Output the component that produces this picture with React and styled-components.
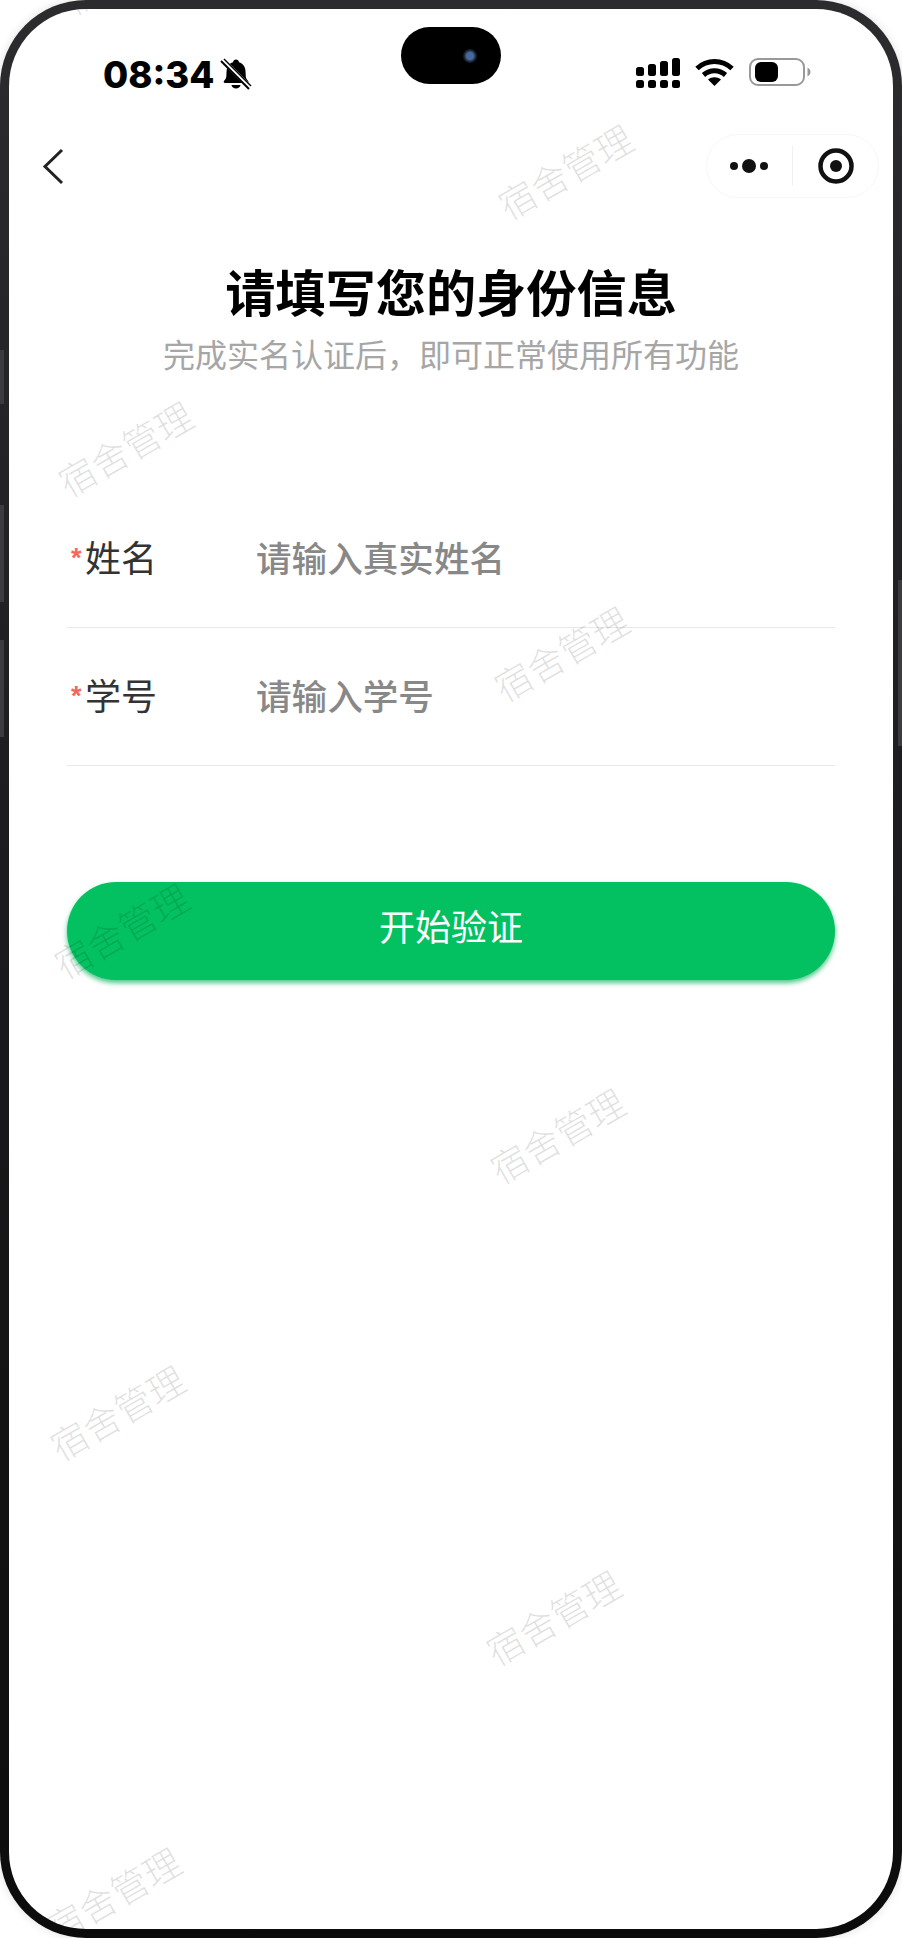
import React from 'react'
import styled, { createGlobalStyle } from 'styled-components'

const CJK = '"Noto Sans CJK SC", "Noto Sans", sans-serif'

const GlobalStyle = createGlobalStyle`
    html, body {
        margin: 0;
        padding: 0;
        background: #fff;
    }
    * {
        box-sizing: border-box;
    }
`

const Device = styled.div`
    position: relative;
    width: 902px;
    height: 1938px;
    padding: 9px;
    border-radius: 86px;
    background: linear-gradient(180deg, #2c2c2e 0%, #1c1c1e 45%, #0c0c0c 100%);
    box-shadow: 0 0 10px rgba(0, 0, 0, 0.12);
    overflow: hidden;
`

const SideKey = styled.i`
    position: absolute;
    top: ${p => p.$top}px;
    ${p => p.$right ? 'right: 0;' : 'left: 0;'}
    width: 4px;
    height: ${p => p.$height}px;
    background: #3c3c3e;
`

const Screen = styled.div`
    position: relative;
    height: 100%;
    display: flex;
    flex-direction: column;
    border-radius: 77px;
    background: #fff;
    overflow: hidden;
    font-family: ${CJK};
`

const StatusBar = styled.div`
    display: grid;
    grid-template-columns: 392px 100px 392px;
    height: 125px;
    padding-top: 18px;
`

const StatusLeft = styled.div`
    display: flex;
    align-items: flex-start;
    gap: 6px;
    padding: 31px 0 0 94px;
`

const Time = styled.span`
    font-family: Inter, "Liberation Sans", sans-serif;
    font-size: 36.5px;
    font-weight: 800;
    line-height: 34px;
    color: #000;
`

const Island = styled.div`
    height: 57px;
    display: flex;
    align-items: center;
    justify-content: flex-end;
    padding-right: 24px;
    border-radius: 29px;
    background: #000;
`

const Camera = styled.span`
    width: 14px;
    height: 14px;
    border-radius: 50%;
    background: radial-gradient(circle, #46699c 0 35%, #18202c 60%, #0c0e14 100%);
`

const StatusRight = styled.div`
    display: flex;
    align-items: flex-start;
    padding: 31px 0 0 135px;
    gap: 15px;
`

const Nav = styled.div`
    height: 64px;
    display: flex;
    align-items: center;
    justify-content: space-between;
    padding: 0 14px 0 33px;
`

const Capsule = styled.div`
    width: 173px;
    height: 64px;
    display: flex;
    align-items: center;
    border: 1px solid #f6f6f6;
    border-radius: 32px;
`

const CapsuleDivider = styled.span`
    width: 1px;
    height: 40px;
    background: #f0f0f0;
`

const CapsuleSlot = styled.span`
    flex: 1;
    display: flex;
    align-items: center;
    justify-content: center;
`

const Title = styled.h1`
    margin: 62px 0 0;
    font-size: 50.2px;
    font-weight: 700;
    line-height: 60px;
    text-align: center;
    color: #000;
`

const Subtitle = styled.p`
    margin: 11px 0 0;
    font-size: 32px;
    line-height: 44px;
    text-align: center;
    color: #a6a6a6;
`

const Form = styled.div`
    margin-top: 115px;
    padding: 0 58px;
`

const Row = styled.div`
    height: 138px;
    display: flex;
    align-items: center;
    border-bottom: 1px solid #e8e8e8;
`

const Label = styled.label`
    width: 189px;
    display: flex;
    align-items: center;
    padding-bottom: 5px;
    font-size: 36px;
    color: #333;
`

const Star = styled.span`
    width: 18px;
    padding: 4px 0 0 4px;
    font-family: "Liberation Sans", sans-serif;
    font-size: 27px;
    font-weight: 700;
    color: #f2695c;
`

const Input = styled.input`
    flex: 1;
    min-width: 0;
    padding: 0 0 4px;
    border: 0;
    outline: 0;
    background: transparent;
    font-family: ${CJK};
    font-size: 35.6px;
    font-weight: 500;
    color: #333;

    &::placeholder {
        color: #888;
        opacity: 1;
    }
`

const SubmitButton = styled.button`
    display: block;
    width: 100%;
    height: 98px;
    margin-top: 116px;
    padding: 0 0 12px;
    border: 0;
    border-radius: 49px;
    background: #03c160;
    box-shadow: 0 3px 5px rgba(3, 175, 88, 0.7);
    font-family: ${CJK};
    font-size: 36px;
    color: #fff;
`

const Watermark = styled.span`
    position: absolute;
    left: ${p => p.$x - 11}px;
    top: ${p => p.$y - 11}px;
    transform: translate(-50%, -50%) rotate(-30deg);
    font-size: 37px;
    font-weight: 300;
    line-height: 1;
    white-space: nowrap;
    color: rgba(0, 0, 0, 0.12);
    pointer-events: none;
`

const marks = [
    [131, -32], [567, 173], [127, 450], [563, 655], [123, 932],
    [559, 1137], [119, 1414], [555, 1619], [115, 1896],
]

const BellOff = () => (
    <svg width="32" height="32" viewBox="0 0 32 32">
        <path d="M16 1.5c1.6 0 2.8 1.2 3 2.8 4 1.2 6.3 4.5 6.5 9l.3 5.2c.1 1.6 1 3 2.2 4.2.9.9.4 2.3-.9 2.3H5c-1.3 0-1.8-1.4-.9-2.3 1.3-1.2 2.1-2.6 2.2-4.2l.3-5.2c.2-4.5 2.5-7.8 6.4-9 .2-1.6 1.4-2.8 3-2.8z" fill="#000" />
        <path d="M11.5 27h9c-.3 2.2-2.2 3.5-4.5 3.5s-4.2-1.3-4.5-3.5z" fill="#000" />
        <path d="M2 1.5l28 28" stroke="#fff" strokeWidth="5" />
        <path d="M1 3l28 28" stroke="#000" strokeWidth="2" />
        <path d="M4 1l27 27" stroke="#000" strokeWidth="1.5" />
    </svg>
)

const Signal = () => (
    <svg width="44" height="31" viewBox="0 0 44 31" fill="#000">
        <rect x="0" y="9" width="8" height="9" rx="2.5" />
        <rect x="12" y="6" width="8" height="12" rx="2.5" />
        <rect x="24" y="3" width="8" height="15" rx="2.5" />
        <rect x="36" y="0" width="8" height="18" rx="2.5" />
        <rect x="0" y="22" width="8" height="8" rx="2.5" />
        <rect x="12" y="22" width="8" height="8" rx="2.5" />
        <rect x="24" y="22" width="8" height="8" rx="2.5" />
        <rect x="36" y="22" width="8" height="8" rx="2.5" />
    </svg>
)

const Wifi = () => (
    <svg width="39" height="29" viewBox="0 0 39 29" fill="none" stroke="#000" strokeWidth="5">
        <path d="M2 10.5c10-9.3 25-9.3 35 0" />
        <path d="M8.5 17c6.5-5.7 15.5-5.7 22 0" />
        <path d="M13 21.5l6.5 6.5 6.5-6.5c-3.8-2.9-9.2-2.9-13 0z" fill="#000" stroke="none" />
    </svg>
)

const Battery = () => (
    <svg width="62" height="29" viewBox="0 0 62 29">
        <rect x="1" y="1" width="54" height="26" rx="8" fill="none" stroke="#999" strokeWidth="2" />
        <rect x="6" y="4" width="23" height="20" rx="6" fill="#000" />
        <path d="M58.5 9.5c2 1 3 2.8 3 4.5s-1 3.5-3 4.5z" fill="#999" />
    </svg>
)

const BackIcon = () => (
    <svg width="22" height="37" viewBox="0 0 22 37" fill="none" stroke="#222" strokeWidth="3">
        <path d="M20 2L3 18.5 20 35" />
    </svg>
)

const MoreIcon = () => (
    <svg width="42" height="16" viewBox="0 0 42 16" fill="#111">
        <circle cx="5" cy="8" r="4" />
        <circle cx="20" cy="8" r="7" />
        <circle cx="35" cy="8" r="4" />
    </svg>
)

const TargetIcon = () => (
    <svg width="36" height="36" viewBox="0 0 36 36">
        <circle cx="18" cy="18" r="15.5" fill="none" stroke="#111" strokeWidth="4.5" />
        <circle cx="18" cy="18" r="6" fill="#111" />
    </svg>
)

const App = () => {
    return (
        <>
            <GlobalStyle />
            <Device>
                <SideKey $top={350} $height={54} />
                <SideKey $top={505} $height={97} />
                <SideKey $top={640} $height={97} />
                <SideKey $right $top={580} $height={166} />
                <Screen>
                    <StatusBar>
                        <StatusLeft>
                            <Time>08:34</Time>
                            <BellOff />
                        </StatusLeft>
                        <Island>
                            <Camera />
                        </Island>
                        <StatusRight>
                            <Signal />
                            <Wifi />
                            <Battery />
                        </StatusRight>
                    </StatusBar>
                    <Nav>
                        <BackIcon />
                        <Capsule>
                            <CapsuleSlot><MoreIcon /></CapsuleSlot>
                            <CapsuleDivider />
                            <CapsuleSlot><TargetIcon /></CapsuleSlot>
                        </Capsule>
                    </Nav>
                    <Title>请填写您的身份信息</Title>
                    <Subtitle>完成实名认证后，即可正常使用所有功能</Subtitle>
                    <Form>
                        <Row>
                            <Label><Star>*</Star>姓名</Label>
                            <Input placeholder="请输入真实姓名" />
                        </Row>
                        <Row>
                            <Label><Star>*</Star>学号</Label>
                            <Input placeholder="请输入学号" />
                        </Row>
                        <SubmitButton>开始验证</SubmitButton>
                    </Form>
                    {marks.map(([x, y]) => (
                        <Watermark key={`${x}-${y}`} $x={x} $y={y}>宿舍管理</Watermark>
                    ))}
                </Screen>
            </Device>
        </>
    )
}

export default App
